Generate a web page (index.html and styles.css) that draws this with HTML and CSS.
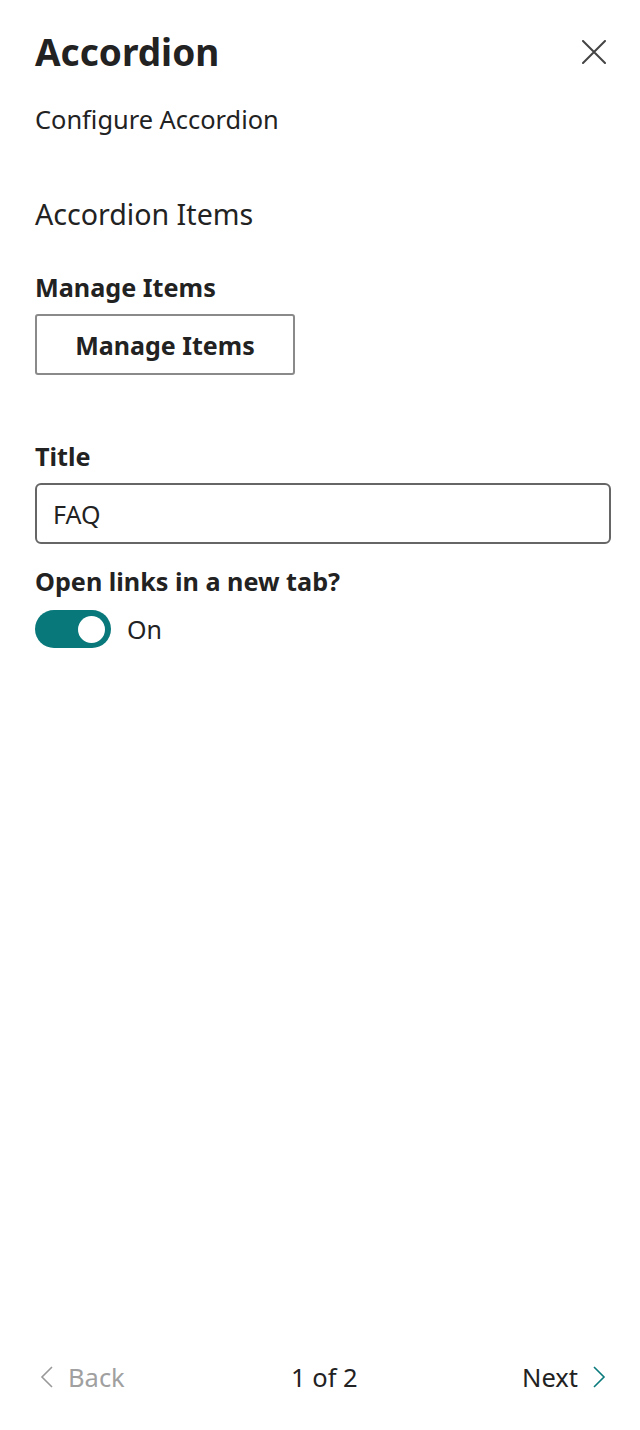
FILE: index.html
```html
<!DOCTYPE html>
<html lang="en">
<head>
  <meta charset="UTF-8" />
  <meta name="viewport" content="width=device-width, initial-scale=1.0" />
  <title>Accordion</title>
  <link rel="stylesheet" href="styles.css">
</head>
<body>
  <div class="pane">
    <header class="pane-header">
      <h1 class="pane-title">Accordion</h1>
      <button class="close-btn" aria-label="Close">
        <svg width="24" height="24" viewBox="0 0 24 24">
          <path d="M1 1 L23 23 M23 1 L1 23" stroke="#444" stroke-width="2" fill="none" stroke-linecap="round"/>
        </svg>
      </button>
    </header>

    <p class="pane-desc">Configure Accordion</p>

    <section class="group">
      <h2 class="group-name">Accordion Items</h2>

      <div class="field">
        <label class="field-label">Manage Items</label>
        <button class="default-btn">Manage Items</button>
      </div>

      <div class="field field-spaced">
        <label class="field-label" for="title">Title</label>
        <input id="title" class="text-input" type="text" value="FAQ">
      </div>

      <div class="field">
        <label class="field-label">Open links in a new tab?</label>
        <div class="toggle-row">
          <span class="toggle"><span class="knob"></span></span>
          <span class="toggle-text">On</span>
        </div>
      </div>
    </section>

    <footer class="pager">
      <span class="pager-back">
        <svg width="14" height="24" viewBox="0 0 14 24"><path d="M12 2 L2 12 L12 22" stroke="#999" stroke-width="1.6" fill="none"/></svg>
        Back
      </span>
      <span class="pager-count">1 of 2</span>
      <span class="pager-next">
        Next
        <svg width="14" height="24" viewBox="0 0 14 24"><path d="M2 2 L12 12 L2 22" stroke="#0b7a7c" stroke-width="1.6" fill="none"/></svg>
      </span>
    </footer>
  </div>
</body>
</html>
```

FILE: styles.css
```css
:root {
  --text: #222;
  --muted: #a0a0a0;
  --teal: #08787a;
  --border: #777;
}

* {
  margin: 0;
  padding: 0;
  box-sizing: border-box;
}

body {
  font-family: "Noto Sans", "Open Sans", sans-serif;
  color: var(--text);
  background: #fff;
}

.pane {
  width: 640px;
  height: 1430px;
  padding: 0 30px 0 35px;
  display: flex;
  flex-direction: column;
}

.pane-header {
  display: flex;
  justify-content: space-between;
  align-items: center;
  padding-top: 28px;
}

.pane-title {
  font-size: 37px;
  font-weight: 700;
  line-height: 48px;
}

.close-btn {
  background: none;
  border: none;
  width: 24px;
  height: 24px;
  margin-right: 4px;
  display: flex;
}

.pane-desc {
  font-size: 25.4px;
  line-height: 34px;
  margin-top: 26px;
}

.group-name {
  font-size: 28.6px;
  font-weight: 400;
  line-height: 38px;
  margin-top: 59px;
}

.field {
  display: flex;
  flex-direction: column;
  align-items: flex-start;
}

.group-name + .field {
  margin-top: 37px;
}

.field-spaced {
  margin-top: 64px;
}

.field-label {
  font-size: 25.2px;
  font-weight: 700;
  line-height: 34px;
  margin-bottom: 10px;
}

.default-btn {
  font-family: inherit;
  font-size: 25px;
  font-weight: 700;
  color: var(--text);
  background: #fff;
  border: 2px solid #8a8a8a;
  border-radius: 3px;
  width: 260px;
  height: 61px;
}

.text-input {
  font-family: inherit;
  font-size: 25px;
  color: var(--text);
  width: 576px;
  height: 61px;
  padding: 0 16px;
  border: 2px solid #666;
  border-radius: 6px;
  margin-bottom: 20px;
}

.toggle-row {
  display: flex;
  align-items: center;
  gap: 16px;
  margin-top: 2px;
}

.toggle {
  width: 76px;
  height: 38px;
  border-radius: 19px;
  background: var(--teal);
  display: flex;
  align-items: center;
  justify-content: flex-end;
  padding-right: 6px;
}

.knob {
  width: 27px;
  height: 27px;
  border-radius: 50%;
  background: #fff;
}

.toggle-text {
  font-size: 25px;
}

.pager {
  margin-top: auto;
  margin-bottom: 36px;
  display: flex;
  justify-content: space-between;
  align-items: center;
  font-size: 25.5px;
  line-height: 34px;
}

.pager-back {
  color: var(--muted);
  display: flex;
  align-items: center;
  gap: 14px;
  padding-left: 5px;
}

.pager-next {
  display: flex;
  align-items: center;
  gap: 14px;
  padding-right: 4px;
}

.pager-count {
  margin-left: 2px;
}
```
